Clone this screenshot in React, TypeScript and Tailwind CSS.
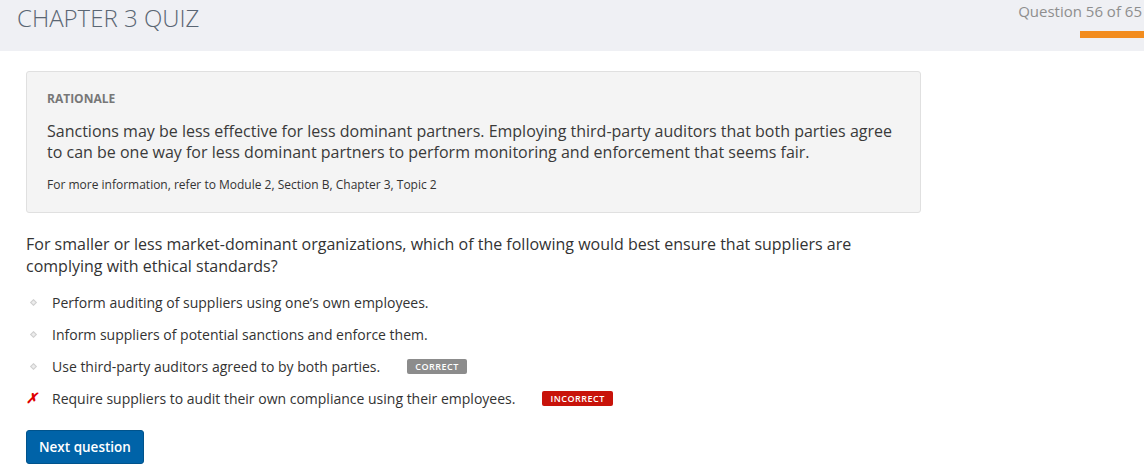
import React from "react";

type Option = {
  id: number;
  label: string;
  status?: "correct" | "incorrect";
};

const options: Option[] = [
  { id: 1, label: "Perform auditing of suppliers using one’s own employees." },
  { id: 2, label: "Inform suppliers of potential sanctions and enforce them." },
  { id: 3, label: "Use third-party auditors agreed to by both parties.", status: "correct" },
  { id: 4, label: "Require suppliers to audit their own compliance using their employees.", status: "incorrect" },
];

const Bullet = ({ wrong }: { wrong: boolean }) =>
  wrong ? (
    <span className="w-[26px] text-[14px] font-bold italic text-[#e00000] leading-none">✗</span>
  ) : (
    <span className="w-[26px] flex items-center">
      <span className="ml-[5px] block h-[5px] w-[5px] rotate-45 border border-[#cfcfcf] bg-[#ececec]" />
    </span>
  );

export default function App() {
  return (
    <div
      className="min-h-[475px] w-[1144px] bg-white text-[#333]"
      style={{ fontFamily: '"Open Sans", "Liberation Sans", sans-serif' }}
    >
      {/* header */}
      <header className="flex h-[51px] items-start justify-between bg-[#eff0f4]">
        <h1 className="pl-[17px] pt-[2px] text-[24px] font-light leading-[32px] text-[#5a6673]">
          CHAPTER 3 QUIZ
        </h1>
        <div className="flex flex-col items-end pt-[1px]">
          <span className="pr-[2px] text-[15px] leading-[20px] text-[#8e8e8e]">Question 56 of 65</span>
          <span className="mt-[10px] block h-[7px] w-[64px] bg-[#f28c1e]" />
        </div>
      </header>

      <main className="px-[26px] pt-[20px]">
        {/* rationale */}
        <section className="w-[895px] rounded-[3px] border border-[#e0e0e0] bg-[#f4f4f4] px-[20px] pt-[18px] pb-[19px]">
          <h2 className="text-[12px] font-bold leading-[18px] text-[#777]">RATIONALE</h2>
          <p className="mt-[13px] text-[16px] leading-[21px] text-[#3a3a3a]">
            Sanctions may be less effective for less dominant partners. Employing third-party auditors that both parties agree
            to can be one way for less dominant partners to perform monitoring and enforcement that seems fair.
          </p>
          <p className="mt-[14px] text-[12px] leading-[16px] text-[#333]">
            For more information, refer to Module 2, Section B, Chapter 3, Topic 2
          </p>
        </section>

        {/* question */}
        <p className="mt-[20px] w-[860px] text-[16px] leading-[22px] text-[#333]">
          For smaller or less market-dominant organizations, which of the following would best ensure that suppliers are
          complying with ethical standards?
        </p>

        <ul className="mt-[9px] flex flex-col">
          {options.map((o) => (
            <li key={o.id} className="flex h-[32px] items-center text-[14px] text-[#333]">
              <Bullet wrong={o.status === "incorrect"} />
              <span>{o.label}</span>
              {o.status === "correct" && (
                <span className="ml-[27px] rounded-[2px] bg-[#8c8c8c] px-[8px] text-[9px] font-semibold leading-[15px] tracking-[0.5px] text-white">
                  CORRECT
                </span>
              )}
              {o.status === "incorrect" && (
                <span className="ml-[27px] rounded-[2px] bg-[#c8130a] px-[8px] text-[9px] font-semibold leading-[15px] tracking-[0.5px] text-white">
                  INCORRECT
                </span>
              )}
            </li>
          ))}
        </ul>

        <button className="mt-[16px] h-[34px] rounded-[3px] border border-[#00538c] bg-[#0063a8] px-[12px] text-[13.5px] font-semibold text-white">
          Next question
        </button>
      </main>
    </div>
  );
}
